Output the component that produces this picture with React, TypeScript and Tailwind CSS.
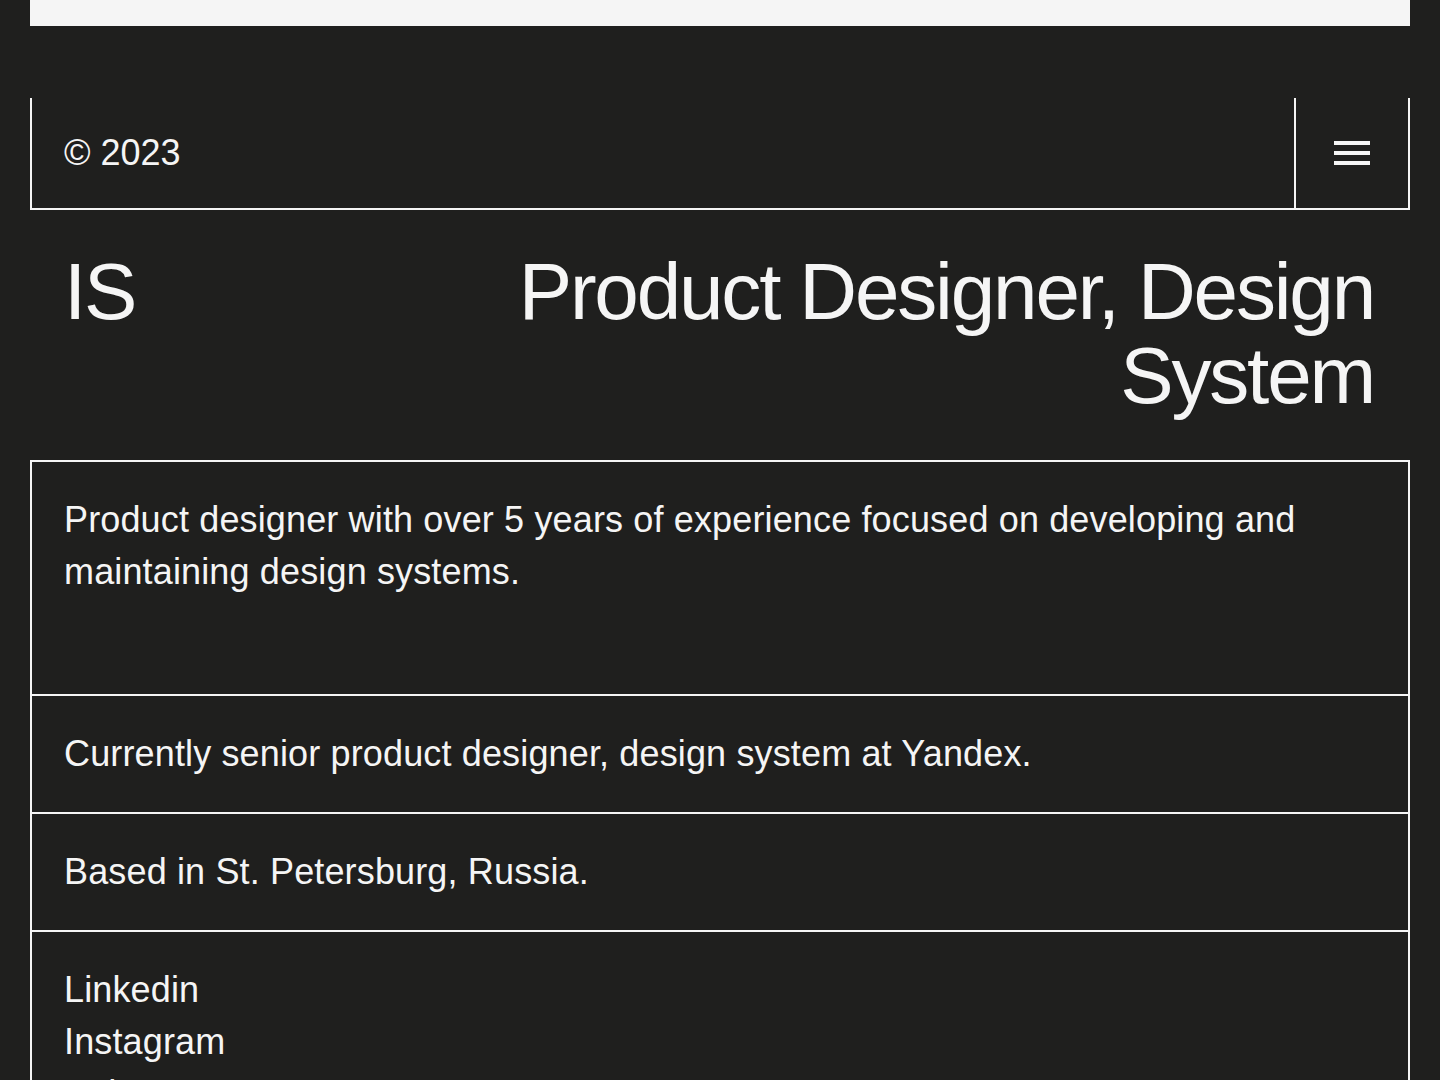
export default function App() {
  const links = ["Linkedin", "Instagram", "Behance"];

  return (
    <div
      className="min-h-screen bg-[#1f1f1e] text-[#f5f5f5] px-[30px]"
      style={{ fontFamily: '"Liberation Sans", Arial, sans-serif' }}
    >
      {/* bottom of previous section */}
      <div className="h-[26px] bg-[#f5f5f5]" />

      {/* header bar */}
      <header className="mt-[72px] flex h-[112px] border-x-2 border-b-2 border-[#f5f5f5]">
        <div className="flex flex-1 items-center px-8 text-[36px] leading-none">
          © 2023
        </div>
        <button className="flex w-[114px] items-center justify-center border-l-2 border-[#f5f5f5]">
          <span className="flex flex-col gap-[6px]">
            <span className="block h-[4px] w-9 bg-[#f5f5f5]" />
            <span className="block h-[4px] w-9 bg-[#f5f5f5]" />
            <span className="block h-[4px] w-9 bg-[#f5f5f5]" />
          </span>
        </button>
      </header>

      {/* title */}
      <section className="flex justify-between pl-[34px] pr-[36px] pt-[40px] pb-[42px]">
        <h1 className="text-[80px] leading-[84px] tracking-[-0.027em]">IS</h1>
        <h2 className="max-w-[900px] text-right text-[80px] leading-[84px] tracking-[-0.027em]">
          Product Designer, Design System
        </h2>
      </section>

      {/* info */}
      <div className="border-2 border-b-0 border-[#f5f5f5] text-[36px] leading-[52px] tracking-[0.004em]">
        <div className="border-b-2 border-[#f5f5f5] px-8 pt-8 pb-24">
          Product designer with over 5 years of experience focused on developing and
          <br />
          maintaining design systems.
        </div>
        <div className="border-b-2 border-[#f5f5f5] px-8 py-8">
          Currently senior product designer, design system at Yandex.
        </div>
        <div className="border-b-2 border-[#f5f5f5] px-8 py-8">
          Based in St. Petersburg, Russia.
        </div>
        <ul className="flex flex-col px-8 py-8">
          {links.map((l) => (
            <li key={l}>
              <a href="#">{l}</a>
            </li>
          ))}
        </ul>
      </div>
    </div>
  );
}
